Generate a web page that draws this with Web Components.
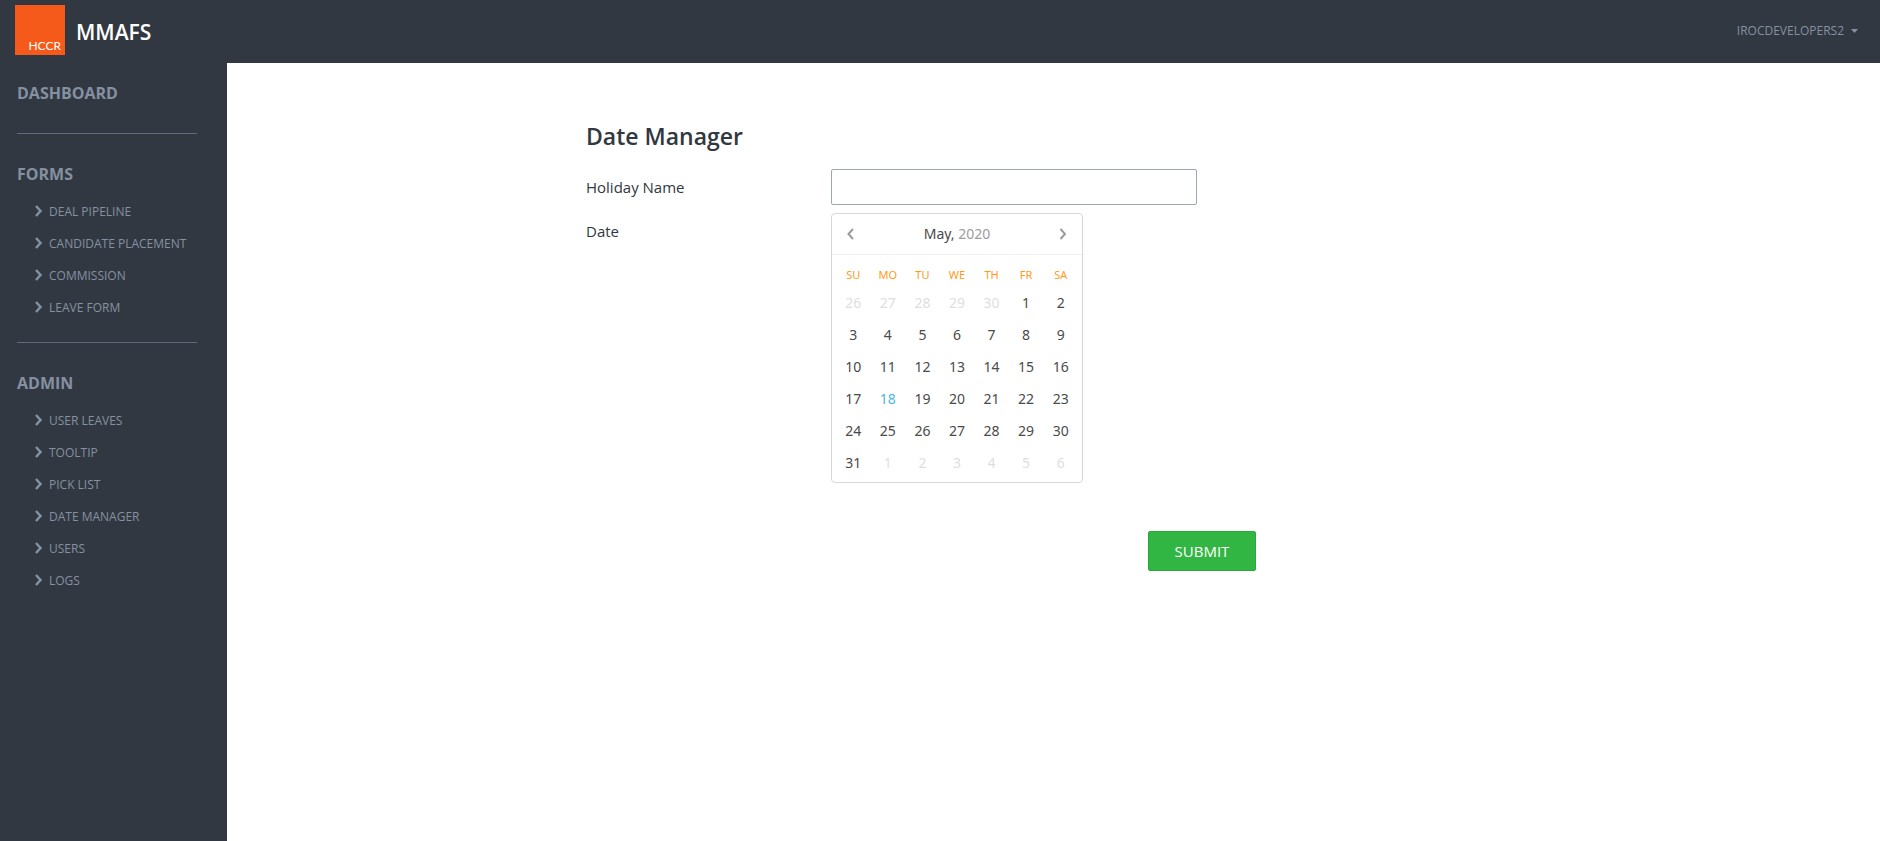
<!DOCTYPE html>
<html lang="en">
<head>
<meta charset="utf-8">
<meta name="viewport" content="width=device-width, initial-scale=1">
<title>MMAFS - Date Manager</title>
<style>
  body { margin: 0; background: #fff; color: #313840; font-family: "Open Sans", "Noto Sans", sans-serif; font-size: 15px; }
</style>
</head>
<body>
<mm-app></mm-app>
<script>
const define = (name, html, setup) => {
  const template = document.createElement('template');
  template.innerHTML = html;
  customElements.define(name, class extends HTMLElement {
    constructor() {
      super();
      this.attachShadow({ mode: 'open' }).append(template.content.cloneNode(true));
    }
    connectedCallback() { if (setup) setup(this, this.shadowRoot); }
  });
};

define('mm-header', `
  <style>
    :host { display: flex; align-items: center; justify-content: space-between; height: 63px; padding: 0 22px 0 15px; box-sizing: border-box; background: #323841; }
    .brand { display: flex; align-items: center; gap: 11px; color: #fff; text-decoration: none; font-size: 21px; font-weight: 600; }
    .logo { display: flex; align-items: flex-end; justify-content: flex-end; width: 50px; height: 50px; padding: 0 4px 2px 0; box-sizing: border-box; margin-bottom: 3px; background: #f65a1a; font: 12px/14px Lato, sans-serif; }
    button { display: flex; align-items: center; gap: 7px; margin-bottom: 2px; padding: 0; border: 0; background: none; color: #8590a2; font: 12px/18px "Open Sans", sans-serif; cursor: pointer; }
    svg { display: block; }
  </style>
  <a class="brand" href="#"><span class="logo">HCCR</span><span>MMAFS</span></a>
  <button type="button"><span>IROCDEVELOPERS2</span><svg width="7" height="4" viewBox="0 0 7 4" aria-hidden="true"><path d="M0 0h7L3.500 4z" fill="currentColor"/></svg></button>
`);

define('mm-nav-link', `
  <style>
    :host { display: block; }
    a { display: flex; align-items: center; gap: 6px; height: 32px; padding-left: 18px; color: #8590a2; text-decoration: none; font-size: 12px; white-space: nowrap; }
    svg { display: block; flex: none; }
  </style>
  <a href="#"><svg width="8" height="12" viewBox="0 0 8 12" aria-hidden="true"><path d="M1 1 5.500 6 1 11" fill="none" stroke="currentColor" stroke-width="2.500"/></svg><slot></slot></a>
`);

define('mm-nav-group', `
  <style>
    :host { display: block; }
    :host(:not([last])) { border-bottom: 1px solid #5f6a80; padding-bottom: 19px; margin-bottom: 24px; }
    :host([plain]) { padding-bottom: 24px !important; }
    h2 { margin: 0; font-size: 16px; line-height: 32px; font-weight: 700; color: #8590a2; }
    :host(:not([plain])) h2 { margin-bottom: 5px; }
    a { color: inherit; text-decoration: none; }
  </style>
  <h2></h2><slot></slot>
`, (el, root) => {
  const h = root.querySelector('h2');
  h.textContent = '';
  if (el.hasAttribute('plain')) {
    const a = document.createElement('a');
    a.href = '#';
    a.textContent = el.getAttribute('heading');
    h.append(a);
  } else h.textContent = el.getAttribute('heading');
});

define('mm-sidebar', `
  <style>
    :host { display: block; width: 227px; padding: 14px 30px 0 17px; box-sizing: border-box; background: #323841; }
  </style>
  <nav>
    <mm-nav-group heading="DASHBOARD" plain></mm-nav-group>
    <mm-nav-group heading="FORMS">
      <mm-nav-link>DEAL PIPELINE</mm-nav-link>
      <mm-nav-link>CANDIDATE PLACEMENT</mm-nav-link>
      <mm-nav-link>COMMISSION</mm-nav-link>
      <mm-nav-link>LEAVE FORM</mm-nav-link>
    </mm-nav-group>
    <mm-nav-group heading="ADMIN" last>
      <mm-nav-link>USER LEAVES</mm-nav-link>
      <mm-nav-link>TOOLTIP</mm-nav-link>
      <mm-nav-link>PICK LIST</mm-nav-link>
      <mm-nav-link>DATE MANAGER</mm-nav-link>
      <mm-nav-link>USERS</mm-nav-link>
      <mm-nav-link>LOGS</mm-nav-link>
    </mm-nav-group>
  </nav>
`);

define('mm-calendar', `
  <style>
    :host { display: block; width: 252px; box-sizing: border-box; border: 1px solid #d7d7d7; border-radius: 4px; background: #fff; color: #4a4a4a; font-family: "Noto Sans", sans-serif; font-size: 14px; }
    header { display: flex; align-items: center; justify-content: space-between; height: 40px; padding: 0 4px; border-bottom: 1px solid #efefef; }
    button { display: grid; place-items: center; width: 30px; height: 32px; padding: 0; border: 0; background: none; color: #9c9c9c; cursor: pointer; }
    .year { color: #9c9c9c; }
    table { width: 242px; margin: 8px 4px 3px; border-collapse: collapse; table-layout: fixed; }
    th, td { padding: 0; text-align: center; height: 32px; }
    th { height: 24px; font-size: 11px; font-weight: 400; color: #ff9a19; }
    .other { color: #dedede; }
    .today { color: #4eb5e6; }
  </style>
  <header>
    <button type="button" aria-label="Previous month"><svg width="8" height="12" viewBox="0 0 8 12"><path d="M6 1 1.500 6 6 11" fill="none" stroke="currentColor" stroke-width="2"/></svg></button>
    <span>May, <span class="year">2020</span></span>
    <button type="button" aria-label="Next month"><svg width="8" height="12" viewBox="0 0 8 12"><path d="M1.500 1 6 6 1.500 11" fill="none" stroke="currentColor" stroke-width="2"/></svg></button>
  </header>
  <table>
    <thead><tr><th scope="col">SU</th><th scope="col">MO</th><th scope="col">TU</th><th scope="col">WE</th><th scope="col">TH</th><th scope="col">FR</th><th scope="col">SA</th></tr></thead>
    <tbody></tbody>
  </table>
`, (el, root) => {
  const body = root.querySelector('tbody');
  body.replaceChildren();
  const day = new Date(2020, 3, 26);
  for (let week = 0; week < 6; week++) {
    const row = body.insertRow();
    for (let i = 0; i < 7; i++) {
      const cell = row.insertCell();
      cell.textContent = day.getDate();
      if (day.getMonth() !== 4) cell.className = 'other';
      else if (day.getDate() === 18) cell.className = 'today';
      day.setDate(day.getDate() + 1);
    }
  }
});

define('mm-date-form', `
  <style>
    :host { display: block; max-width: 935px; margin: 0 auto; }
    form { max-width: 670px; }
    h1 { margin: 0 0 17px; font-size: 23px; line-height: 32px; font-weight: 600; }
    .row { display: grid; grid-template-columns: 245px minmax(0, 366px); margin-bottom: 8px; line-height: 36px; }
    input { width: 100%; height: 36px; box-sizing: border-box; padding: 0 12px; border: 1px solid #9da7b5; border-radius: 2px; background: #fff; color: inherit; font: inherit; }
    mm-calendar { line-height: 20px; }
    .actions { display: flex; justify-content: flex-end; margin-top: 48px; }
    .actions button { width: 108px; height: 40px; padding: 0; border: 1px solid #2ca63b; border-radius: 2px; background: #32b643; color: #fff; font: 15px/20px "Open Sans", sans-serif; cursor: pointer; }
  </style>
  <form>
    <h1>Date Manager</h1>
    <div class="row"><label for="name">Holiday Name</label><input id="name" type="text"></div>
    <div class="row"><span id="date">Date</span><mm-calendar role="group" aria-labelledby="date"></mm-calendar></div>
    <div class="actions"><button type="button">SUBMIT</button></div>
  </form>
`);

define('mm-app', `
  <style>
    :host { display: grid; grid-template: auto 1fr / 227px minmax(0, 1fr); min-height: 100vh; }
    mm-header { grid-column: 1 / -1; }
    main { padding: 57px 24px 48px; }
  </style>
  <mm-header></mm-header>
  <mm-sidebar></mm-sidebar>
  <main><mm-date-form></mm-date-form></main>
`);
</script>
</body>
</html>
